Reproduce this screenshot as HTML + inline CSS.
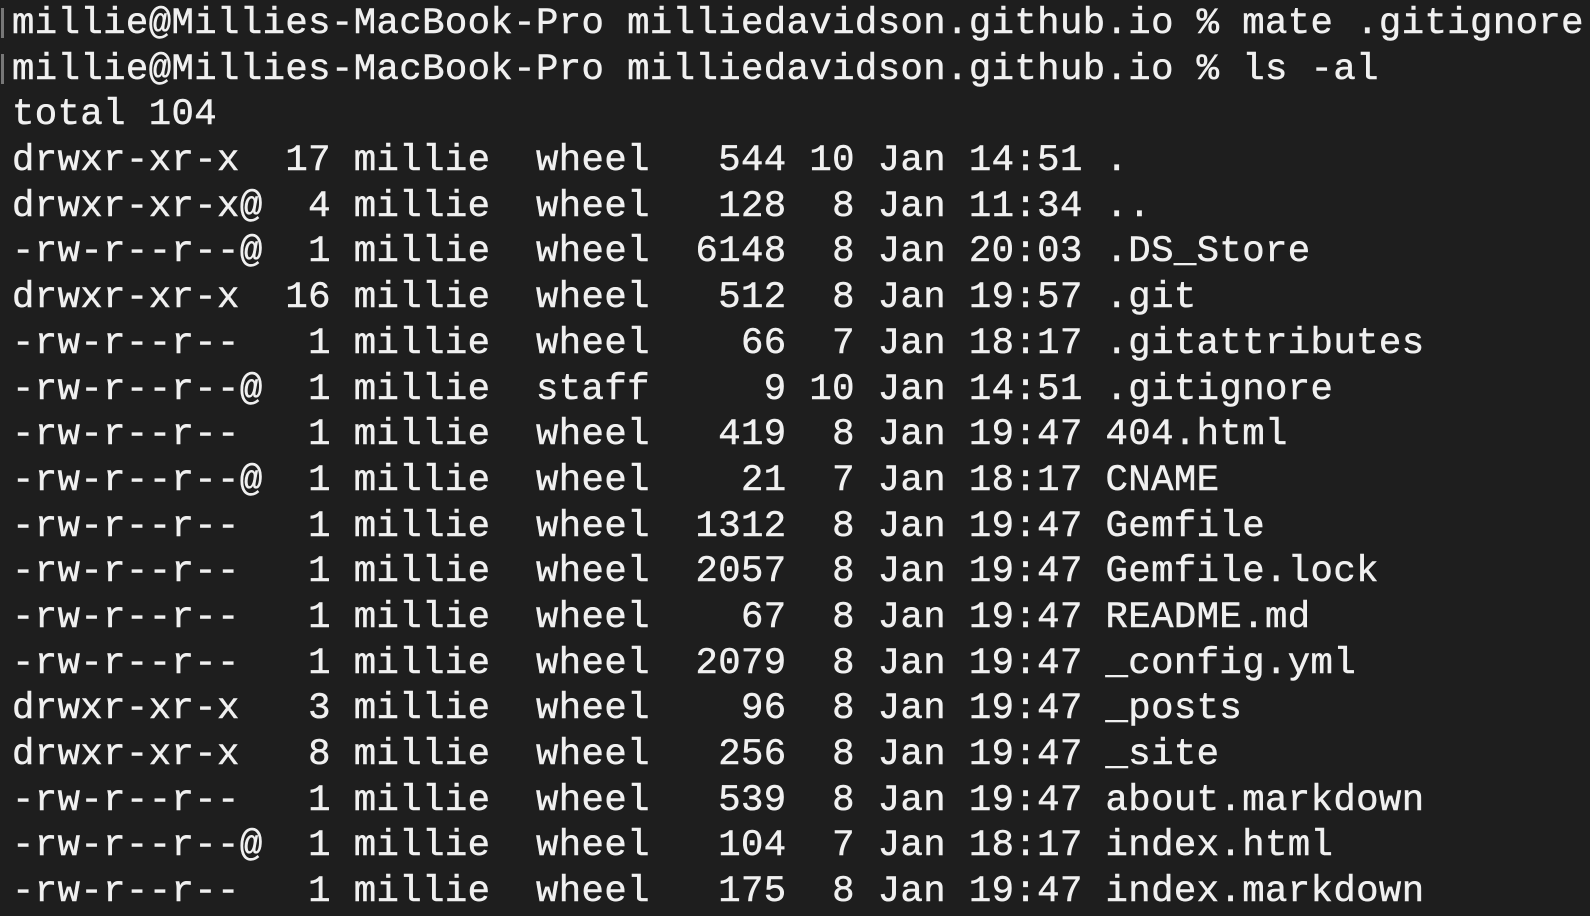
<!DOCTYPE html>
<html><head><style>
html,body{margin:0;padding:0;background:#1e1e1e;width:1590px;height:916px;overflow:hidden}
.t{position:absolute;left:12px;top:2px;font-family:"Liberation Mono",monospace;font-size:37.3px;letter-spacing:0.4px;color:#f0f0f0;-webkit-text-stroke:0.5px #f0f0f0}
.t div{height:45.7px;line-height:45.7px;white-space:pre}
.b{position:absolute;left:1px;width:3px;height:30px;background:#777}
</style></head><body>
<div class="b" style="top:8px"></div><div class="b" style="top:54px"></div>
<div class="t">
<div>millie@Millies-MacBook-Pro milliedavidson.github.io % mate .gitignore</div>
<div>millie@Millies-MacBook-Pro milliedavidson.github.io % ls -al</div>
<div>total 104</div>
<div>drwxr-xr-x  17 millie  wheel   544 10 Jan 14:51 .</div>
<div>drwxr-xr-x@  4 millie  wheel   128  8 Jan 11:34 ..</div>
<div>-rw-r--r--@  1 millie  wheel  6148  8 Jan 20:03 .DS_Store</div>
<div>drwxr-xr-x  16 millie  wheel   512  8 Jan 19:57 .git</div>
<div>-rw-r--r--   1 millie  wheel    66  7 Jan 18:17 .gitattributes</div>
<div>-rw-r--r--@  1 millie  staff     9 10 Jan 14:51 .gitignore</div>
<div>-rw-r--r--   1 millie  wheel   419  8 Jan 19:47 404.html</div>
<div>-rw-r--r--@  1 millie  wheel    21  7 Jan 18:17 CNAME</div>
<div>-rw-r--r--   1 millie  wheel  1312  8 Jan 19:47 Gemfile</div>
<div>-rw-r--r--   1 millie  wheel  2057  8 Jan 19:47 Gemfile.lock</div>
<div>-rw-r--r--   1 millie  wheel    67  8 Jan 19:47 README.md</div>
<div>-rw-r--r--   1 millie  wheel  2079  8 Jan 19:47 _config.yml</div>
<div>drwxr-xr-x   3 millie  wheel    96  8 Jan 19:47 _posts</div>
<div>drwxr-xr-x   8 millie  wheel   256  8 Jan 19:47 _site</div>
<div>-rw-r--r--   1 millie  wheel   539  8 Jan 19:47 about.markdown</div>
<div>-rw-r--r--@  1 millie  wheel   104  7 Jan 18:17 index.html</div>
<div>-rw-r--r--   1 millie  wheel   175  8 Jan 19:47 index.markdown</div>
</div>
</body></html>
